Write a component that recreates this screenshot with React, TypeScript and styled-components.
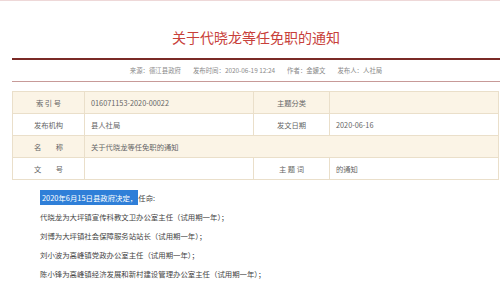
import React from 'react';
import styled, { createGlobalStyle } from 'styled-components';

const GlobalStyle = createGlobalStyle`
	html, body {
		margin: 0;
		padding: 0;
		background: #ffffff;
	}
	body {
		font-family: 'Noto Sans CJK SC', 'Noto Sans', sans-serif;
		overflow: hidden;
	}
`;

const meta = [
	{ label: '来源：', value: '德江县政府' },
	{ label: '发布时间：', value: '2020-06-19 12:24' },
	{ label: '作者：', value: '金媛文' },
	{ label: '发布人：', value: '人社局' },
];

const items = [
	'代晓龙为大坪镇宣传科教文卫办公室主任（试用期一年）；',
	'刘博为大坪镇社会保障服务站站长（试用期一年）；',
	'刘小波为高峰镇党政办公室主任（试用期一年）；',
	'陈小锋为高峰镇经济发展和新村建设管理办公室主任（试用期一年）；',
];

const App = () => {
	return (
		<Page>
			<GlobalStyle />
			<Header>
				<Title>关于代晓龙等任免职的通知</Title>
			</Header>
			<MetaBar>
				{meta.map((m) => (
					<MetaItem key={m.label}>
						{m.label}
						{m.value}
					</MetaItem>
				))}
			</MetaBar>

			<InfoTable>
				<tbody>
					<Row shaded>
						<LabelCell>索 引 号</LabelCell>
						<ValueCell>016071153-2020-00022</ValueCell>
						<LabelCell narrow>主题分类</LabelCell>
						<ValueCell></ValueCell>
					</Row>
					<Row>
						<LabelCell>发布机构</LabelCell>
						<ValueCell>县人社局</ValueCell>
						<LabelCell narrow>发文日期</LabelCell>
						<ValueCell>2020-06-16</ValueCell>
					</Row>
					<Row shaded>
						<LabelCell>名　　称</LabelCell>
						<ValueCell colSpan={3}>关于代晓龙等任免职的通知</ValueCell>
					</Row>
					<Row>
						<LabelCell>文　　号</LabelCell>
						<ValueCell></ValueCell>
						<LabelCell narrow>主 题 词</LabelCell>
						<ValueCell>的通知</ValueCell>
					</Row>
				</tbody>
			</InfoTable>

			<Content>
				<Para>
					<Selected>2020年6月15日县政府决定，</Selected>任命:
				</Para>
				{items.map((t) => (
					<Para key={t}>{t}</Para>
				))}
			</Content>
		</Page>
	);
};

export default App;

const Page = styled.div`
	width: 500px;
	height: 283px;
	border-top: 1px solid #eed8d8;
	box-sizing: border-box;
	padding-left: 12px;
	background: #fff;
`;

const Header = styled.div`
	display: flex;
	justify-content: center;
	align-items: center;
	box-sizing: border-box;
	height: 59px;
	padding-top: 14px;
	border-bottom: 2px solid #7a2a26;
`;

const Title = styled.h1`
	margin: 0;
	font-size: 14px;
	font-weight: 400;
	color: #c8403a;
`;

const MetaBar = styled.div`
	display: flex;
	justify-content: center;
	gap: 12px;
	height: 21px;
	align-items: center;
	border-bottom: 1px solid #c79a98;
`;

const MetaItem = styled.span`
	font-size: 6.4px;
	color: #8a8a8a;
`;

const InfoTable = styled.table`
	margin-top: 9px;
	width: 487px;
	border-collapse: collapse;
	table-layout: fixed;
	font-size: 7.3px;
	color: #666;
`;

const Row = styled.tr<{ shaded?: boolean }>`
	height: 22px;
	background: ${({ shaded }) => (shaded ? '#fbf4e6' : '#ffffff')};
`;

const LabelCell = styled.td<{ narrow?: boolean }>`
	width: ${({ narrow }) => (narrow ? '75px' : '71px')};
	border: 1px solid #eadfca;
	text-align: center;
	padding: 0;
	white-space: pre;
`;

const ValueCell = styled.td`
	border: 1px solid #eadfca;
	padding: 0 0 0 6px;
	white-space: nowrap;
`;

const Content = styled.div`
	padding: 8px 0 0 28px;
	display: flex;
	flex-direction: column;
`;

const Para = styled.p`
	margin: 0;
	height: 19px;
	line-height: 19px;
	font-size: 7.4px;
	color: #444;
	white-space: nowrap;
`;

const Selected = styled.span`
	background: #2f7fd8;
	color: #fff;
	padding: 2px 1px 2px 2px;
`;
